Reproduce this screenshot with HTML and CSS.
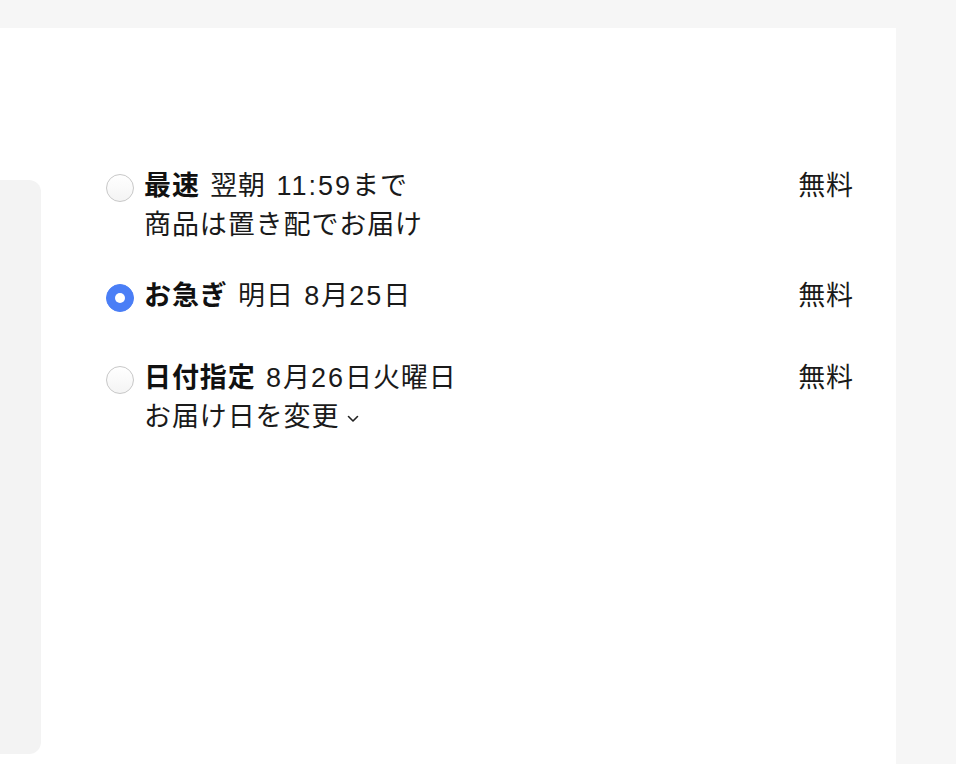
FILE: index.html
```html
<!DOCTYPE html>
<html lang="ja">
<head>
    <meta charset="UTF-8">
    <meta name="viewport" content="width=device-width, initial-scale=1.0">
    <title>お届け日時</title>
    <link rel="stylesheet" href="styles.css">
</head>
<body>
    <div class="panel">
        <div class="side-box"></div>

        <div class="options">
            <label class="option">
                <span class="radio"></span>
                <span class="option-text">
                    <span class="line"><b>最速</b> 翌朝 <span class="num">11:59</span>まで</span>
                    <span class="line">商品は置き配でお届け</span>
                </span>
                <span class="price">無料</span>
            </label>

            <label class="option single">
                <span class="radio checked"></span>
                <span class="option-text">
                    <span class="line"><b>お急ぎ</b> 明日 <span class="num">8</span>月<span class="num">25</span>日</span>
                </span>
                <span class="price">無料</span>
            </label>

            <label class="option">
                <span class="radio"></span>
                <span class="option-text">
                    <span class="line"><b>日付指定</b> <span class="num">8</span>月<span class="num">26</span>日火曜日</span>
                    <span class="line change">お届け日を変更<svg class="chevron" viewBox="0 0 12 8" width="12" height="8">
                            <path d="M1.5 1.5 L6 6 L10.5 1.5" fill="none" stroke="#222" stroke-width="1.6" stroke-linecap="round" stroke-linejoin="round"/>
                        </svg></span>
                </span>
                <span class="price">無料</span>
            </label>
        </div>
    </div>
</body>
</html>
```

FILE: styles.css
```css
body {
    margin: 0;
    background: #f6f6f6;
    font-family: "Liberation Sans", "Noto Sans CJK JP", sans-serif;
    color: #1a1a1a;
}

.panel {
    margin-top: 28px;
    width: 896px;
    height: 736px;
    background: #fff;
    display: flex;
    align-items: flex-start;
}

.side-box {
    width: 41px;
    height: 574px;
    margin-top: 152px;
    background: #f3f3f3;
    border-radius: 0 12px 12px 0;
    flex-shrink: 0;
}

.options {
    flex: 1;
    margin-left: 65px;
    margin-right: 42px;
    padding-top: 139px;
    display: flex;
    flex-direction: column;
}

.option {
    display: flex;
    align-items: flex-start;
    font-size: 27px;
    letter-spacing: 0.9px;
    word-spacing: 2px;
    line-height: 39px;
    margin-bottom: 32px;
}

.option.single {
    margin-bottom: 43px;
}

.radio {
    width: 26px;
    height: 26px;
    margin-top: 7px;
    border: 1px solid #c8c8c8;
    border-radius: 50%;
    background: linear-gradient(#fff, #f4f4f4);
    flex-shrink: 0;
    display: flex;
    align-items: center;
    justify-content: center;
}

.radio.checked {
    border-color: #4a7ef6;
    background: #4a7ef6;
}

.radio.checked::after {
    content: "";
    width: 10px;
    height: 10px;
    border-radius: 50%;
    background: #fff;
}

.option-text {
    flex: 1;
    margin-left: 10px;
    display: flex;
    flex-direction: column;
}

.line b {
    font-weight: bold;
    color: #111;
}

.num {
    letter-spacing: 2px;
}

.change .chevron {
    margin-left: 8px;
    vertical-align: middle;
}

.price {
    flex-shrink: 0;
}
```
